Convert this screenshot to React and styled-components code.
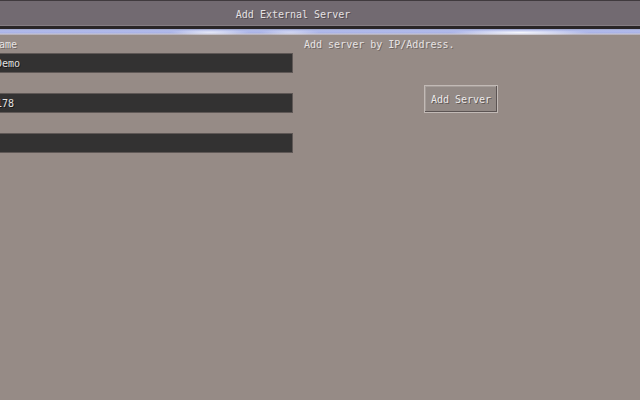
import React from 'react';
import styled, { createGlobalStyle } from 'styled-components';

const GlobalStyle = createGlobalStyle`
    html, body {
        margin: 0;
        padding: 0;
        background-color: #968b86;
        overflow: hidden;
    }
    body {
        font-family: 'DejaVu Sans Mono', 'Liberation Mono', monospace;
        font-size: 10px;
        color: #e6e3e3;
    }
`;

const Screen = styled.div`
    width: 640px;
    height: 400px;
    display: flex;
    flex-direction: column;
    background-color: #968b86;
    overflow: hidden;
`;

const TitleBar = styled.div`
    height: 26px;
    box-sizing: border-box;
    border-top: 1px solid #403a3e;
    border-bottom: 1px solid #867e84;
    background-color: #726a71;
    display: flex;
    align-items: center;
    justify-content: center;
    padding-right: 54px;
    padding-top: 2px;
    text-shadow: 1px 1px 0 rgba(40, 36, 38, 0.45);
    color: #e4e0e2;
`;

const Shade = styled.div`
    height: 3px;
    background-color: #2a2628;
`;

const Glow = styled.div`
    height: 6px;
    background:
        radial-gradient(ellipse 40px 3px at 210px 55%, rgba(255, 255, 255, 0.7), transparent),
        radial-gradient(ellipse 30px 3px at 290px 55%, rgba(255, 255, 255, 0.45), transparent),
        radial-gradient(ellipse 70px 3px at 520px 60%, rgba(255, 255, 255, 0.9), transparent),
        linear-gradient(to bottom, #9ea6c8 0%, #b3bcee 30%, #aab3e6 60%, #c4c3d6 85%, #a59b98 100%);
`;

const Body = styled.div`
    display: grid;
    grid-template-columns: 305px 1fr;
    column-gap: 11px;
    margin-left: -12px;
`;

const FieldColumn = styled.div`
    display: flex;
    flex-direction: column;
`;

const Label = styled.div`
    height: 18px;
    padding-left: ${(p) => (p.$flush ? 0 : 5)}px;
    display: flex;
    align-items: flex-end;
    padding-bottom: 3px;
    box-sizing: border-box;
    white-space: nowrap;
    text-shadow: 1px 1px 0 rgba(50, 44, 44, 0.4);
`;

const Spacer = styled.div`
    height: ${(p) => p.h}px;
`;

const TextField = styled.div`
    height: 20px;
    box-sizing: border-box;
    border: 1px solid #5f5856;
    background-color: #333232;
    padding-left: 7px;
    display: flex;
    align-items: center;
    color: #e2e0e0;
    text-shadow: 1px 1px 0 rgba(0, 0, 0, 0.5);
`;

const InfoColumn = styled.div`
    display: flex;
    flex-direction: column;
    align-items: flex-start;
`;

const Button = styled.div`
    margin-top: 32px;
    margin-left: 120px;
    width: 74px;
    height: 28px;
    box-sizing: border-box;
    border: 1px solid #c2bab6;
    box-shadow: inset -1px -1px 0 #5c5453, inset 1px 1px 0 #a59d99;
    background-color: #928985;
    display: flex;
    align-items: center;
    justify-content: center;
    color: #ece9e9;
    text-shadow: 1px 1px 0 rgba(40, 36, 36, 0.5);
`;

function App() {
    return (
        <Screen>
            <GlobalStyle />
            <TitleBar>Add External Server</TitleBar>
            <Shade />
            <Glow />
            <Body>
                <FieldColumn>
                    <Label>Name</Label>
                    <TextField>Demo</TextField>
                    <Spacer h={20} />
                    <TextField>178</TextField>
                    <Spacer h={20} />
                    <TextField />
                </FieldColumn>
                <InfoColumn>
                    <Label $flush>Add server by IP/Address.</Label>
                    <Button>Add Server</Button>
                </InfoColumn>
            </Body>
        </Screen>
    );
}

export default App;
